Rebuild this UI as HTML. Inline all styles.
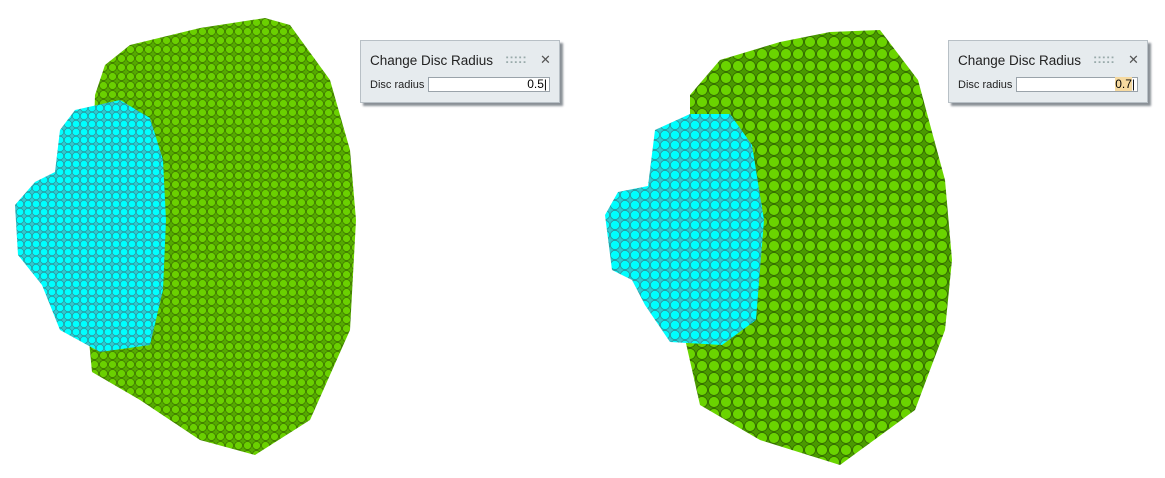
<!DOCTYPE html>
<html><head><style>
body{margin:0;width:1165px;height:478px;background:#fff;position:relative;overflow:hidden;font-family:"Liberation Sans",sans-serif}
.dlg{position:absolute;top:40px;width:200px;height:63px;background:#e6ebee;border:1px solid #b8c0c6;box-shadow:3px 3px 2px #8a9096;box-sizing:border-box}
.t{position:absolute;left:9px;top:12px;font-size:13.5px;color:#222}
.g{position:absolute;left:144px;top:10px;font-size:13px;color:#9aa;letter-spacing:0px;font-weight:bold}
.x{position:absolute;left:179px;top:11px;font-size:13px;color:#555}
.l{position:absolute;left:9px;top:38px;font-size:11px;color:#222}
.in{position:absolute;left:67px;top:36px;width:122px;height:15px;background:#fff;border:1px solid #9aa3aa;box-sizing:border-box;font-size:12px;text-align:right;line-height:13px;padding-right:2px}
</style></head><body>
<svg width="1165" height="478" style="position:absolute;left:0;top:0">
<defs>
<pattern id="gp" width="9" height="9" patternUnits="userSpaceOnUse"><rect width="9" height="9" fill="#55aa00"/><circle cx="4.5" cy="4.5" r="4" fill="#6ad000" stroke="#3a7000" stroke-width="0.7"/></pattern>
<pattern id="gp2" width="12" height="12" patternUnits="userSpaceOnUse"><rect width="12" height="12" fill="#4a9a00"/><circle cx="6" cy="6" r="5.5" fill="#6ad400" stroke="#2f6400" stroke-width="0.8"/></pattern>
<pattern id="cp" width="8" height="8" patternUnits="userSpaceOnUse"><rect width="8" height="8" fill="#30c8d0"/><circle cx="4" cy="4" r="3.7" fill="#00ffff" stroke="#2a8a90" stroke-width="0.6"/></pattern>
<pattern id="cp2" width="10" height="10" patternUnits="userSpaceOnUse"><rect width="10" height="10" fill="#30c8d0"/><circle cx="5" cy="5" r="4.6" fill="#00ffff" stroke="#2a8a90" stroke-width="0.7"/></pattern>
</defs>
<polygon fill="url(#gp)" points="105,65 130,45 200,28 265,18 290,25 330,80 350,150 356,220 350,330 310,420 255,455 200,440 140,400 92,372 88,330 95,95"/>
<polygon fill="url(#cp)" points="75,110 120,100 150,118 163,160 166,220 163,290 150,345 100,352 60,330 42,285 18,255 15,205 35,182 55,172 60,130"/>
<polygon fill="url(#gp2)" points="690,95 720,60 780,42 830,32 880,30 918,80 945,180 952,260 945,330 915,410 840,465 760,440 700,405 683,330 695,260 690,150"/>
<polygon fill="url(#cp2)" points="655,130 690,114 730,114 752,145 764,220 756,320 722,345 670,342 645,305 632,280 612,270 605,215 618,192 648,186"/>
</svg>
<div class="dlg" style="left:360px"><div class="t">Change Disc Radius</div><div class="g">:::::</div><div class="x">✕</div><div class="l">Disc radius</div><div class="in">0.5|</div></div>
<div class="dlg" style="left:948px"><div class="t">Change Disc Radius</div><div class="g">:::::</div><div class="x">✕</div><div class="l">Disc radius</div><div class="in"><span style="background:#f5d9a0">0.7</span>|</div></div>
</body></html>
